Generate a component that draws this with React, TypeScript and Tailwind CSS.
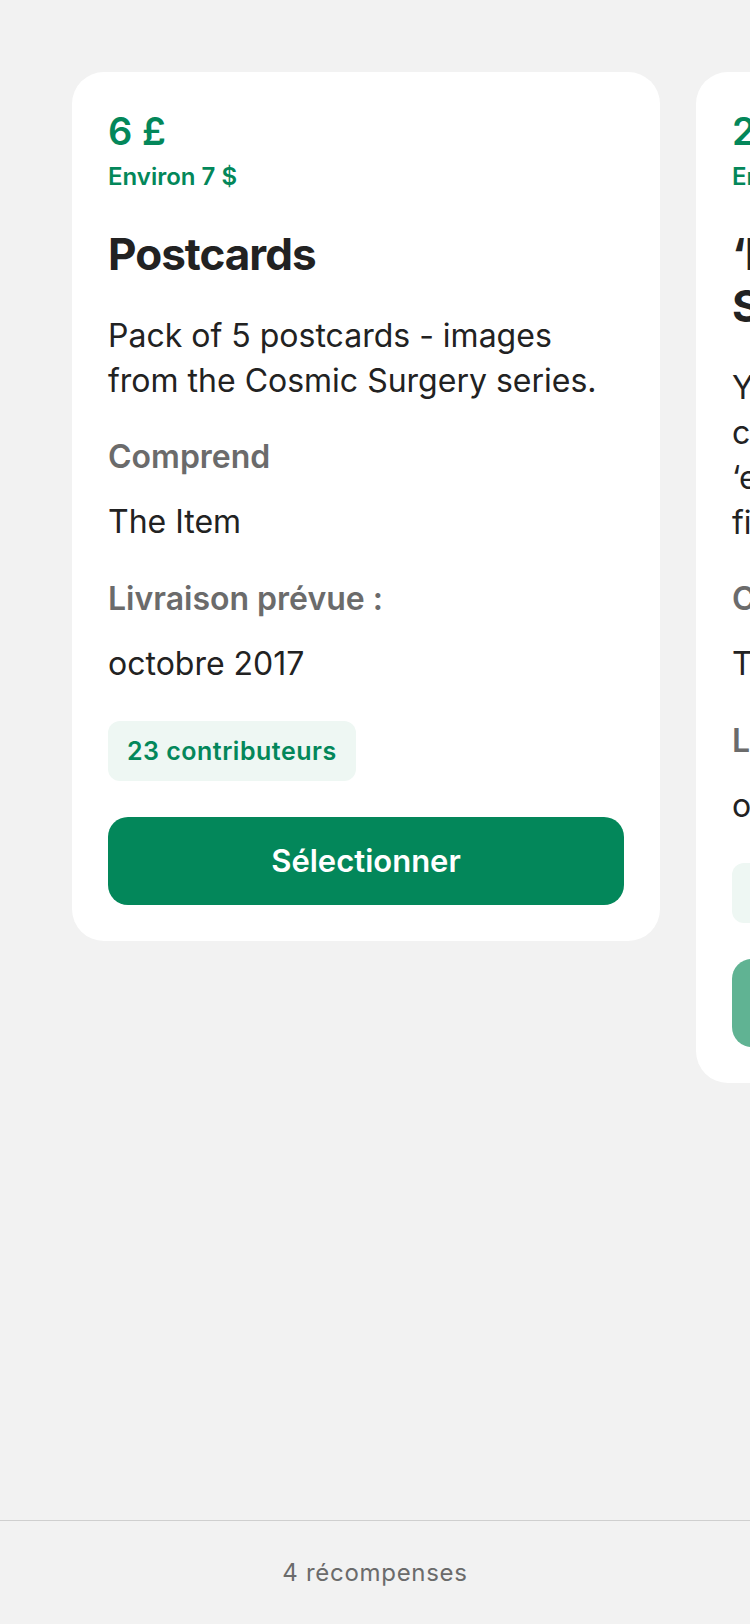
const REWARDS = [
  {
    price: '6 £',
    approx: 'Environ 7 $',
    title: ['Postcards'],
    description: ['Pack of 5 postcards - images', 'from the Cosmic Surgery series.'],
    includes: 'The Item',
    delivery: 'octobre 2017',
    backers: '23 contributeurs',
    disabled: false,
  },
  {
    price: '25 £',
    approx: 'Environ 32 $',
    title: ['‘Illuminated’', 'Signed Print'],
    description: [
      'Your choice of one A4 print',
      'chosen from the series, each',
      '‘edition’ signed and numbered,',
      'first in line for delivery.',
    ],
    includes: 'The Print',
    delivery: 'octobre 2017',
    backers: '41 contributeurs',
    disabled: true,
  },
]

function RewardCard({ reward }: { reward: (typeof REWARDS)[number] }) {
  return (
    <article className="flex w-[588px] shrink-0 flex-col self-start rounded-[32px] bg-white p-9">
      <p className="text-[38px] font-semibold leading-[46px] text-[#03875a]">{reward.price}</p>
      <p className="mt-2 text-[24px] font-semibold leading-[30px] text-[#03875a]">{reward.approx}</p>
      <h2 className="mt-9 text-[44px] font-bold leading-[52px] tracking-[-1px] text-[#222222]">
        {reward.title.map((line) => (
          <span key={line} className="block whitespace-nowrap">
            {line}
          </span>
        ))}
      </h2>
      <p className="mt-[33px] text-[32px] leading-[45px] text-[#222222]">
        {reward.description.map((line) => (
          <span key={line} className="block whitespace-nowrap">
            {line}
          </span>
        ))}
      </p>
      <p className="mt-[32px] text-[32px] font-semibold leading-[44px] text-[#6b6b6b]">Comprend</p>
      <p className="mt-[21px] text-[32px] leading-[44px] text-[#222222]">{reward.includes}</p>
      <p className="mt-[33px] text-[32px] font-semibold leading-[44px] text-[#6b6b6b]">Livraison prévue :</p>
      <p className="mt-[21px] text-[32px] leading-[44px] text-[#222222]">{reward.delivery}</p>
      <span className="mt-[35px] self-start rounded-xl bg-[#eef7f3] px-[19px] text-[25px] font-semibold leading-[60px] tracking-[0.5px] text-[#03875a]">
        {reward.backers}
      </span>
      <button
        className={`mt-9 h-[88px] w-full rounded-[20px] text-[31px] font-semibold text-white ${
          reward.disabled ? 'bg-[#60b393]' : 'bg-[#03875a]'
        }`}
      >
        Sélectionner
      </button>
    </article>
  )
}

export default function App() {
  return (
    <div className="flex min-h-screen w-full flex-col overflow-hidden bg-[#f2f2f2] font-['Inter',sans-serif]">
      <main className="flex flex-1 gap-9 pl-[72px] pt-[72px]">
        {REWARDS.map((reward) => (
          <RewardCard key={reward.price} reward={reward} />
        ))}
      </main>
      <footer className="flex h-[104px] items-center justify-center border-t border-[#cfcfcf]">
        <p className="text-[24px] tracking-[0.7px] text-[#6b6b6b]">4 récompenses</p>
      </footer>
    </div>
  )
}
